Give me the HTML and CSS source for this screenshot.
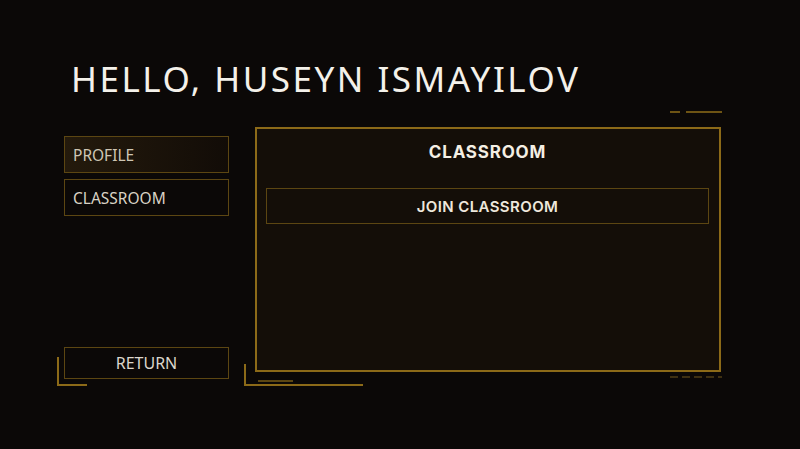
FILE: index.html
```html
<!DOCTYPE html>
<html lang="en">
<head>
  <meta charset="UTF-8" />
  <title>Classroom</title>
  <link rel="stylesheet" href="styles.css">
</head>
<body>
  <div class="page">
    <h1 class="greeting">HELLO, HUSEYN ISMAYILOV</h1>
    <div class="main">
      <div class="sidebar">
        <div class="menu">
          <div class="menu-item active">PROFILE</div>
          <div class="menu-item">CLASSROOM</div>
        </div>
        <div class="return-wrap">
          <span class="bracket bracket-return"></span>
          <div class="return-btn">RETURN</div>
        </div>
      </div>
      <div class="panel-wrap">
        <span class="deco deco-top-a"></span>
        <span class="deco deco-top-b"></span>
        <span class="bracket bracket-panel"></span>
        <span class="deco deco-bottom-a"></span>
        <span class="deco deco-dash"></span>
        <div class="panel">
          <h2 class="panel-title">CLASSROOM</h2>
          <div class="join-btn">JOIN CLASSROOM</div>
        </div>
      </div>
    </div>
  </div>
</body>
</html>
```

FILE: styles.css
```css
body {
  margin: 0;
  background: #0b0807;
  font-family: "Noto Sans", "Open Sans", sans-serif;
  color: #e8e2d6;
}
.page {
  width: 800px;
  height: 449px;
  padding: 57px 0 0 71px;
  box-sizing: border-box;
}
.greeting {
  margin: 0;
  font-weight: 400;
  font-size: 35px;
  line-height: 44px;
  letter-spacing: 2.5px;
  color: #f4f1ea;
}
.main {
  display: flex;
  margin-top: 26px;
}
.sidebar {
  width: 165px;
  margin-left: -7px;
  margin-top: 9px;
  height: 243px;
  display: flex;
  flex-direction: column;
  justify-content: space-between;
}
.menu {
  display: flex;
  flex-direction: column;
  gap: 6px;
}
.menu-item {
  height: 35px;
  border: 1px solid #5c4612;
  display: flex;
  align-items: center;
  padding-left: 8px;
  font-size: 15.5px;
  color: #d9d2c4;
}
.menu-item.active {
  background: linear-gradient(90deg, #241a0c, #120c07);
  color: #cfc6b4;
}
.return-wrap {
  position: relative;
}
.return-btn {
  height: 30px;
  border: 1px solid #5c4612;
  display: flex;
  align-items: center;
  justify-content: center;
  font-size: 16px;
  color: #dcd6cc;
}
.bracket {
  position: absolute;
  border-left: 2px solid #8c6a18;
  border-bottom: 2px solid #8c6a18;
}
.bracket-return {
  left: -7px;
  top: 10px;
  width: 28px;
  height: 27px;
}
.panel-wrap {
  position: relative;
  margin-left: 26px;
}
.panel {
  width: 443px;
  height: 241px;
  border: 2px solid #8c6a18;
  background: #140e08;
  padding: 0 10px 0 9px;
}
.panel-title {
  margin: 12px 0 0;
  text-align: center;
  font-family: Inter, sans-serif;
  font-weight: 700;
  font-size: 17px;
  line-height: 22px;
  letter-spacing: 0.8px;
  color: #f4efe4;
}
.join-btn {
  margin-top: 25px;
  height: 34px;
  border: 1px solid #5c4612;
  display: flex;
  align-items: center;
  justify-content: center;
  font-family: Inter, sans-serif;
  font-weight: 600;
  font-size: 15px;
  letter-spacing: 0.4px;
  color: #eee8dc;
}
.deco {
  position: absolute;
  height: 2px;
  background: #6e5414;
}
.deco-top-a { left: 415px; top: -16px; width: 10px; }
.deco-top-b { left: 431px; top: -16px; width: 36px; }
.deco-bottom-a { left: 3px; top: 253px; width: 35px; background: #5c4612; }
.deco-dash {
  left: 415px;
  top: 249px;
  width: 52px;
  background: repeating-linear-gradient(90deg, #3e3012 0 8px, transparent 8px 12px);
}
.bracket-panel {
  left: -11px;
  top: 237px;
  width: 117px;
  height: 20px;
}
```
